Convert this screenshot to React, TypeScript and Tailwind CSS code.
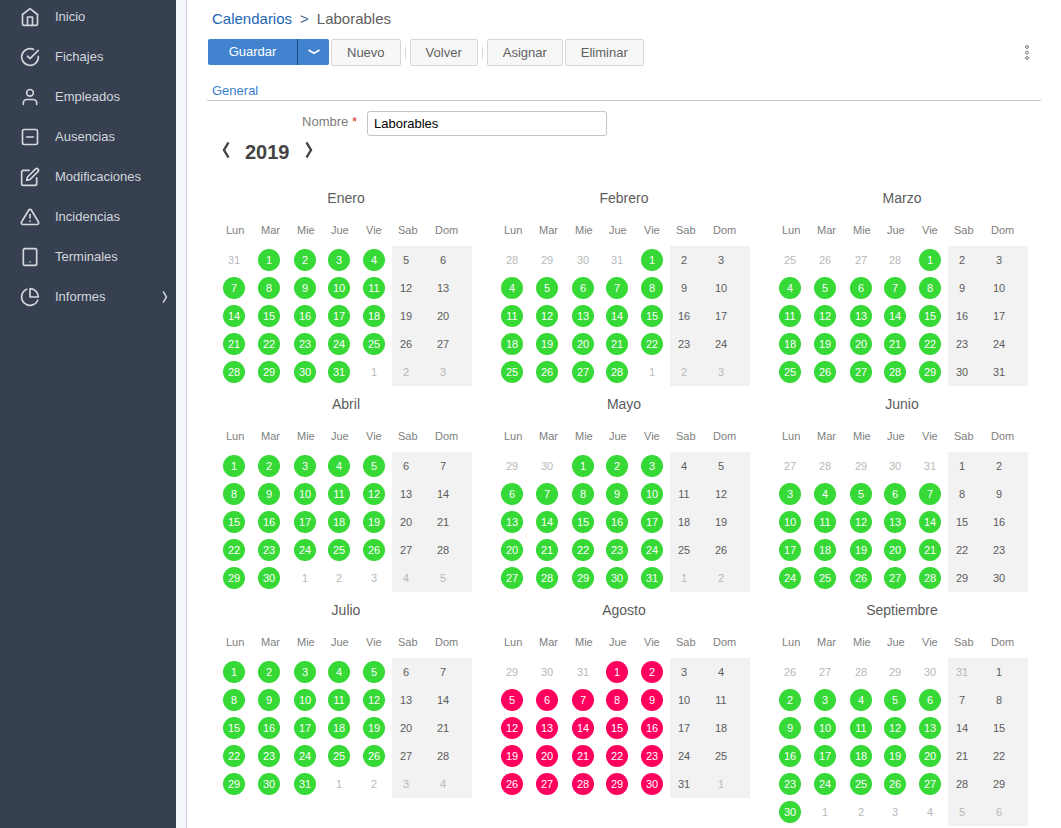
import React, { useState } from 'react';
import {
  FiHome,
  FiCheckCircle,
  FiUser,
  FiMinusSquare,
  FiEdit,
  FiAlertTriangle,
  FiTablet,
  FiPieChart,
} from 'react-icons/fi';
import type { IconType } from 'react-icons';

interface MenuItem {
  label: string;
  icon: IconType;
  hasChildren?: boolean;
}

interface Day {
  key: string;
  number: number;
  inMonth: boolean;
  weekend: boolean;
}

const MENU: MenuItem[] = [
  { label: 'Inicio', icon: FiHome },
  { label: 'Fichajes', icon: FiCheckCircle },
  { label: 'Empleados', icon: FiUser },
  { label: 'Ausencias', icon: FiMinusSquare },
  { label: 'Modificaciones', icon: FiEdit },
  { label: 'Incidencias', icon: FiAlertTriangle },
  { label: 'Terminales', icon: FiTablet },
  { label: 'Informes', icon: FiPieChart, hasChildren: true },
];

const MONTHS = ['Enero', 'Febrero', 'Marzo', 'Abril', 'Mayo', 'Junio', 'Julio', 'Agosto', 'Septiembre'];

const WEEKDAYS = [
  { label: 'Lun', width: 'w-[35px]' },
  { label: 'Mar', width: 'w-[36px]' },
  { label: 'Mie', width: 'w-[34px]' },
  { label: 'Jue', width: 'w-[35px]' },
  { label: 'Vie', width: 'w-[32px]' },
  { label: 'Sab', width: 'w-[37px]' },
  { label: 'Dom', width: 'w-[43px]' },
];

const HOLIDAY_MONTH = 7;

// Weeks run from Monday to Sunday
const getWeeks = (year: number, month: number): Day[][] => {
  const offset = (new Date(year, month, 1).getDay() + 6) % 7;
  const length = new Date(year, month + 1, 0).getDate();
  const weekCount = Math.ceil((offset + length) / 7);

  return Array.from({ length: weekCount }, (_, w) =>
    Array.from({ length: 7 }, (_, d) => {
      const date = new Date(year, month, 1 - offset + w * 7 + d);
      return {
        key: `${date.getMonth()}-${date.getDate()}`,
        number: date.getDate(),
        inMonth: date.getMonth() === month,
        weekend: d > 4,
      };
    })
  );
};

const Chevron = ({ className, direction }: { className: string; direction: 'left' | 'right' }) => (
  <svg className={className} viewBox="0 0 8 16" fill="none" stroke="currentColor" aria-hidden="true">
    <path d={direction === 'left' ? 'M6.5 0.5 L2 8 L6.5 15.5' : 'M1.5 0.5 L6 8 L1.5 15.5'} />
  </svg>
);

const Sidebar = () => (
  <nav className="w-44 shrink-0 bg-[#364051] text-[13px] text-[#d3d7dc]">
    <ul className="-mt-[3px]">
      {MENU.map(({ label, icon: Icon, hasChildren }) => (
        <li key={label}>
          <a href="#" className="flex h-10 items-center pl-5 pr-2">
            <Icon size={20} className="shrink-0" />
            <span className="ml-[15px] flex-1">{label}</span>
            {hasChildren && <Chevron direction="right" className="h-3 w-1.5 stroke-2" />}
          </a>
        </li>
      ))}
    </ul>
  </nav>
);

const ToolbarButton = ({ children }: { children: React.ReactNode }) => (
  <button
    type="button"
    className="h-[27px] rounded-xs border border-[#d5d6d8] bg-[#f7f7f7] px-[15px] text-[#606060] hover:bg-gray-100"
  >
    {children}
  </button>
);

const Separator = () => <span className="mx-0.5 h-3 w-px self-center bg-[#dcd8d6]" />;

const Toolbar = () => (
  <div className="mt-2.5 flex items-center justify-between pl-px text-[13px]">
    <div className="flex items-start gap-0.5">
      <div className="flex h-[26px] overflow-hidden rounded-xs bg-[#4283cf] text-white">
        <button type="button" className="w-[90px] border-r border-[#1d4a7d] hover:bg-blue-600">
          Guardar
        </button>
        <button type="button" aria-label="Más opciones" className="flex w-[31px] items-center justify-center">
          <svg className="h-1.5 w-3" viewBox="0 0 12 6" fill="none" stroke="currentColor" strokeWidth="1.7">
            <path d="M0.5 1 L6 4.3 L11.5 1" />
          </svg>
        </button>
      </div>
      <ToolbarButton>Nuevo</ToolbarButton>
      <Separator />
      <ToolbarButton>Volver</ToolbarButton>
      <Separator />
      <ToolbarButton>Asignar</ToolbarButton>
      <ToolbarButton>Eliminar</ToolbarButton>
    </div>
    <button type="button" aria-label="Menú" className="mr-3 text-[#777]">
      <svg className="h-4 w-1" viewBox="0 0 4 16" fill="none" stroke="currentColor">
        <circle cx="2" cy="2" r="1.4" />
        <circle cx="2" cy="7.5" r="1.4" />
        <circle cx="2" cy="13" r="1.4" />
      </svg>
    </button>
  </div>
);

const dayClass = (day: Day, month: number) => {
  if (!day.inMonth) return 'text-[#b8b8b8]';
  if (day.weekend) return 'text-[#5c5c5c]';
  return month === HOLIDAY_MONTH ? 'bg-[#ff005e] text-white' : 'bg-[#36d936] text-white';
};

const Month = ({ year, month }: { year: number; month: number }) => (
  <table className="mx-auto w-[252px] table-fixed self-start text-[11px]">
    <caption className="h-9 text-sm leading-9 text-[#5c5c5c]">{MONTHS[month]}</caption>
    <thead>
      <tr className="h-[30px]">
        {WEEKDAYS.map(({ label, width }) => (
          <th key={label} className={`${width} pb-0.5 pl-1.5 text-left font-normal text-[#808080]`}>
            {label}
          </th>
        ))}
      </tr>
    </thead>
    <tbody>
      {getWeeks(year, month).map((week) => (
        <tr key={week[0].key} className="h-7">
          {week.map((day) => (
            <td key={day.key} className={`pl-[3px] ${day.weekend ? 'bg-[#f2f2f2]' : ''}`}>
              <span
                className={`flex size-[22px] items-center justify-center rounded-full ${dayClass(day, month)}`}
              >
                {day.number}
              </span>
            </td>
          ))}
        </tr>
      ))}
    </tbody>
  </table>
);

export default function App() {
  const [year, setYear] = useState(2019);
  const [name, setName] = useState('Laborables');

  return (
    <div className="flex min-h-screen bg-white font-['Liberation_Sans',Arial,sans-serif]">
      <Sidebar />
      <div className="w-[11px] shrink-0 border-r border-[#d0d4d9] bg-[#f4f8fc]" />

      <main className="min-w-0 flex-1 px-5 pt-2">
        {/* Breadcrumb */}
        <div className="flex gap-2 pl-[5px] text-[15px] leading-[21px] text-[#606060]">
          <a href="#" className="text-[#1c65b3]">Calendarios</a>
          <span className="text-[#3f6593]">&gt;</span>
          <span>Laborables</span>
        </div>

        <Toolbar />

        <div className="mt-[15px] border-b border-[#c6c8ca] pl-[5px] text-[13px] leading-[19px]">
          <a href="#" className="text-[#3a80cc]">General</a>
        </div>

        <div className="mt-2.5 flex text-[13px]">
          <label htmlFor="nombre" className="w-[150px] text-right leading-[21px] text-[#7c7c7c]">
            Nombre <span className="text-[#d62c1a]">*</span>
          </label>
          <input
            id="nombre"
            type="text"
            value={name}
            onChange={(e) => setName(e.target.value)}
            className="ml-2.5 h-[25px] w-60 rounded-[3px] border border-[#bfc4ca] px-1.5 text-black outline-none"
          />
        </div>

        {/* Year selector */}
        <div className="flex h-8 items-center pl-[15px] text-[#444]">
          <button type="button" aria-label="Año anterior" className="pb-1" onClick={() => setYear(year - 1)}>
            <Chevron direction="left" className="h-4 w-2 stroke-[2.4]" />
          </button>
          <h2 className="mx-[15px] text-xl font-bold">{year}</h2>
          <button type="button" aria-label="Año siguiente" className="pb-1" onClick={() => setYear(year + 1)}>
            <Chevron direction="right" className="h-4 w-2 stroke-[2.4]" />
          </button>
        </div>

        <div className="mt-3 grid grid-cols-3">
          {MONTHS.map((label, month) => (
            <Month key={label} year={year} month={month} />
          ))}
        </div>
      </main>
    </div>
  );
}
